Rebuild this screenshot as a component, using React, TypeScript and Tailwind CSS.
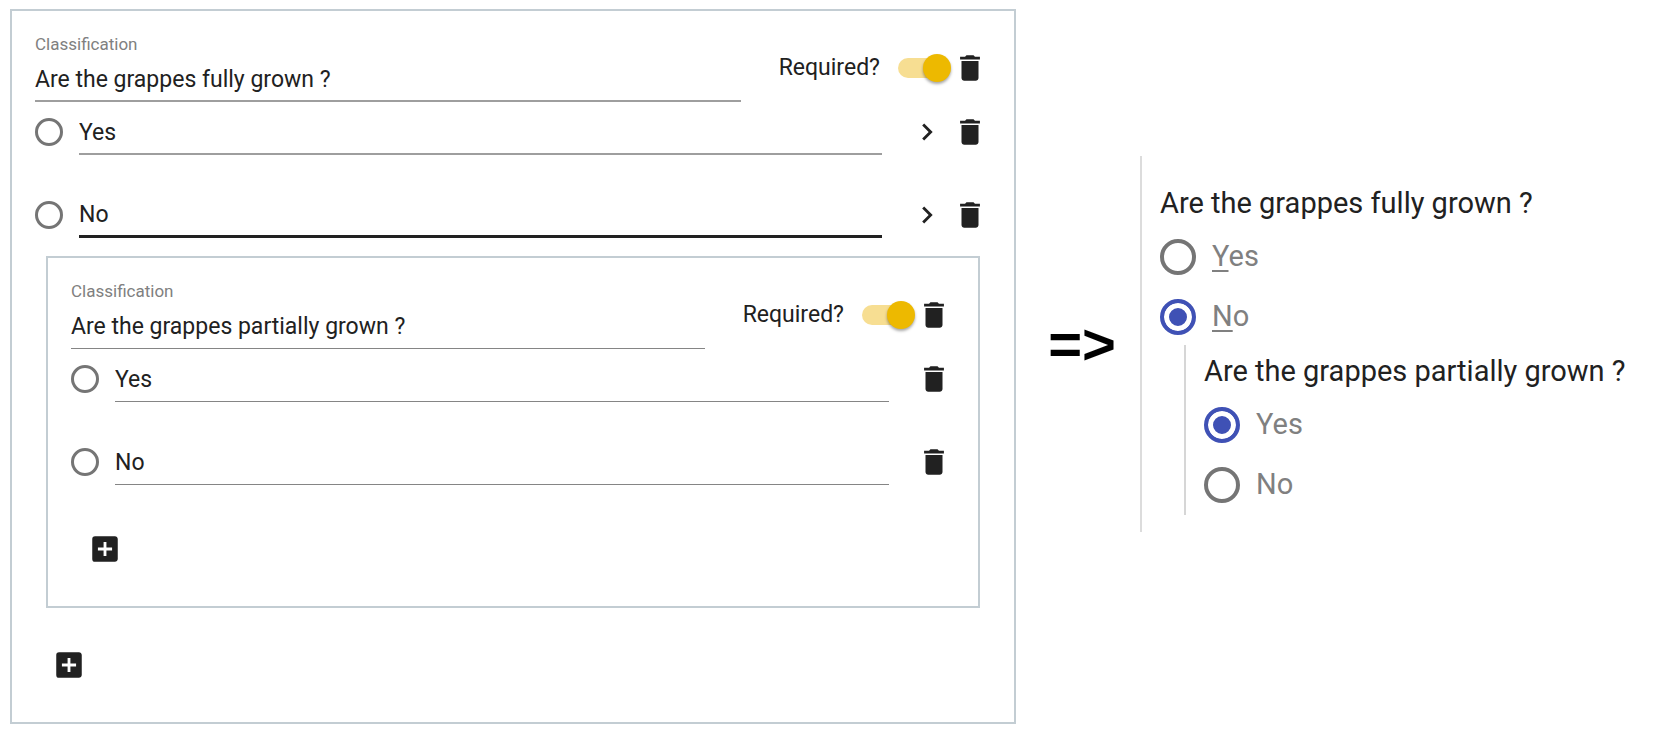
import { useId } from "react";
import type { ReactNode } from "react";
import { MdAddBox, MdChevronRight, MdDelete } from "react-icons/md";

type FieldProps = { id?: string; label?: string; value: string; focused?: boolean; nested?: boolean };

function TextField({ id, label, value, focused, nested }: FieldProps) {
  const line = focused
    ? "border-b-3 border-[#212121]"
    : nested
      ? "border-b border-[#858585]"
      : "border-b-2 border-[#9e9e9e]";
  return (
    <input
      id={id}
      type="text"
      aria-label={label}
      defaultValue={value}
      className={`block h-[46px] w-full min-w-0 bg-transparent p-0 pt-0.5 text-[23px] text-[#212121] outline-none ${line}`}
    />
  );
}

function IconButton({ label, children }: { label: string; children: ReactNode }) {
  return (
    <button type="button" aria-label={label} className="size-[34px] shrink-0 cursor-pointer text-[34px] text-[#212121]">
      {children}
    </button>
  );
}

function RequiredSwitch() {
  return (
    <label className="flex shrink-0 cursor-pointer items-center gap-[18px] text-[23px] text-[#212121]">
      Required?
      <span className="relative flex h-7 w-[53px] items-center">
        <input type="checkbox" role="switch" defaultChecked className="peer sr-only" />
        <span className="h-5 w-[49px] rounded-full bg-[#f7de92]" />
        <span className="absolute right-0 size-7 rounded-full bg-[#edb900] shadow-[0_2px_3px_rgba(0,0,0,0.35)]" />
      </span>
    </label>
  );
}

type OptionProps = { group: string; value: string; focused?: boolean; nested?: boolean };

function OptionRow({ group, value, focused, nested }: OptionProps) {
  return (
    <div className="flex h-[60px] items-center">
      <input
        type="radio"
        name={group}
        aria-label={value}
        className="mr-4 size-7 shrink-0 appearance-none rounded-full border-3 border-[#757575]"
      />
      <div className="min-w-0 flex-1">
        <TextField label={`Option ${value}`} value={value} focused={focused} nested={nested} />
      </div>
      <div className="ml-7 flex gap-[9px]">
        {!nested && (
          <IconButton label={`Expand ${value}`}>
            <MdChevronRight />
          </IconButton>
        )}
        <IconButton label={`Delete ${value}`}>
          <MdDelete />
        </IconButton>
      </div>
    </div>
  );
}

type CardProps = { question: string; nested?: boolean; focusedOption?: string; children?: ReactNode };

function ClassificationCard({ question, nested, focusedOption, children }: CardProps) {
  const id = useId();
  return (
    <section className="border-2 border-[#c3cdd3] pt-[21px] pb-10">
      <div className="pr-[27px] pl-[23px]">
        <div className="flex items-center">
          <div className="min-w-0 flex-1">
            <label htmlFor={id} className="block text-[17px] leading-6 text-[#808080]">
              Classification
            </label>
            <TextField id={id} value={question} nested={nested} />
          </div>
          <div className="ml-[38px] flex items-center gap-0.5 pt-0.5">
            <RequiredSwitch />
            <IconButton label="Delete classification">
              <MdDelete />
            </IconButton>
          </div>
        </div>
        <div className="flex flex-col gap-[23px]">
          <OptionRow group={`${id}-options`} value="Yes" nested={nested} />
          <OptionRow group={`${id}-options`} value="No" nested={nested} focused={focusedOption === "No"} />
        </div>
      </div>
      {children && <div className="mx-[34px] mt-[11px]">{children}</div>}
      <div className="mt-10 flex pl-10">
        <IconButton label="Add option">
          <MdAddBox />
        </IconButton>
      </div>
    </section>
  );
}

type ChoiceProps = { group: string; value: string; checked?: boolean; hotkey?: boolean };

function Choice({ group, value, checked, hotkey }: ChoiceProps) {
  return (
    <label className="flex h-[60px] cursor-pointer items-center gap-4 text-[29px] text-[#808080]">
      <input
        type="radio"
        name={group}
        defaultChecked={checked}
        className="size-9 shrink-0 appearance-none rounded-full border-4 border-[#757575] checked:border-[#3f51b5] checked:bg-[#3f51b5] checked:shadow-[inset_0_0_0_5px_white]"
      />
      <span>
        {hotkey ? <u className="decoration-2 underline-offset-4">{value[0]}</u> : value[0]}
        {value.slice(1)}
      </span>
    </label>
  );
}

function Question({ text }: { text: string }) {
  return <p className="mb-0.5 text-[29px] leading-[44px] whitespace-nowrap text-[#212121]">{text}</p>;
}

export default function App() {
  return (
    <main className="flex bg-white pt-[9px] pl-2.5 font-['Roboto',sans-serif]">
      <div className="min-w-0 flex-1">
        <ClassificationCard question="Are the grappes fully grown ?" focusedOption="No">
          <ClassificationCard question="Are the grappes partially grown ?" nested />
        </ClassificationCard>
      </div>
      <div className="flex shrink-0 items-center pb-[45px]">
        <div className="w-[124px] pl-2 text-center font-['Liberation_Sans',sans-serif] text-[58px] leading-none font-bold text-black">
          {"=>"}
        </div>
        <div className="w-[526px] border-l-2 border-[#dcdcdc] pt-[25px] pb-[17px] pl-[18px]">
          <Question text="Are the grappes fully grown ?" />
          <Choice group="fully" value="Yes" hotkey />
          <Choice group="fully" value="No" hotkey checked />
          <div className="-mt-0.5 ml-6 border-l-2 border-[#d6d6d6] pt-1 pl-[18px]">
            <Question text="Are the grappes partially grown ?" />
            <Choice group="partially" value="Yes" checked />
            <Choice group="partially" value="No" />
          </div>
        </div>
      </div>
    </main>
  );
}
